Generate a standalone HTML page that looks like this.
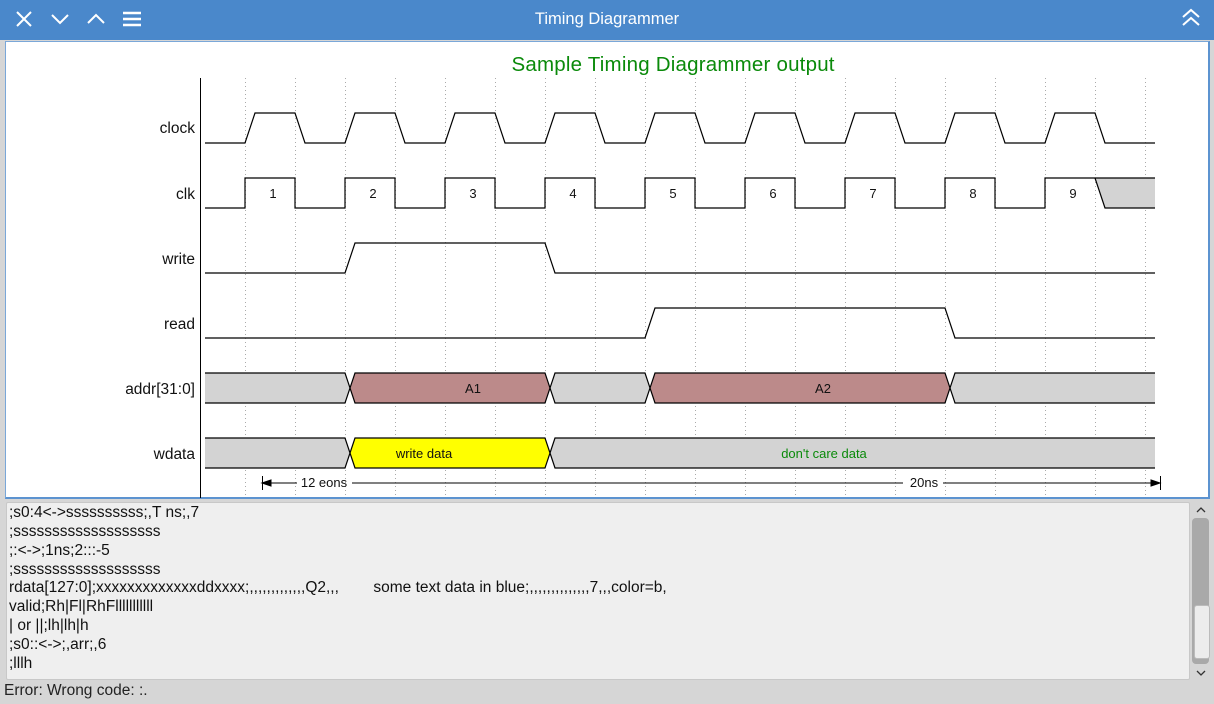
<!DOCTYPE html>
<html><head><meta charset="utf-8"><style>
body{margin:0;width:1214px;height:704px;overflow:hidden;background:#d6d6d6;font-family:"Liberation Sans","DejaVu Sans",sans-serif;position:relative}
#tb{position:absolute;left:0;top:0;width:1214px;height:40px;background:#4a88cb}
#tt{position:absolute;left:0;width:1214px;top:10px;text-align:center;color:#fff;font-size:16.5px}
#cv{position:absolute;left:5px;top:41px;width:1202px;height:455px;background:#fff;border:1px solid #7aa7d8;border-right:2px solid #5c93d0;border-bottom:2px solid #5c93d0}
#ta{position:absolute;left:6px;top:502px;width:1182px;height:176px;background:#efefef;border:1px solid #c8c8c8;border-radius:2px}
#ta div{position:absolute;left:2px;font-size:15.5px;color:#111;white-space:pre}
#sb{position:absolute;left:1192px;top:518px;width:17px;height:146px;background:#a9a9a9;border-radius:4px}
#th{position:absolute;left:1194px;top:605px;width:14px;height:52px;background:#ececec;border-radius:3px;border:1px solid #bbb}
#st{position:absolute;left:4px;top:682px;font-size:15.5px;color:#222}
</style></head><body>
<div id="tb">
<svg width="160" height="40" style="position:absolute;left:0;top:0" stroke="#fff" stroke-width="2" fill="none">
<path d="M17 12L31 26M31 12L17 26"/>
<path d="M52 15L60 23L68 15"/>
<path d="M88 23L96 15L104 23"/>
<path d="M123 13H141M123 19H141M123 25H141" stroke-width="2.5"/>
</svg>
<div id="tt">Timing Diagrammer</div>
<svg width="30" height="40" style="position:absolute;left:1178px;top:0" stroke="#fff" stroke-width="2" fill="none">
<path d="M5 17L13 10L21 17M5 25L13 18L21 25"/>
</svg>
</div>
<div id="cv"></div>
<svg width="1214" height="500" style="position:absolute;left:0;top:0" font-family="Liberation Sans, DejaVu Sans, sans-serif">
<g stroke="#aaa" stroke-dasharray="1,3" stroke-width="1">
<path d="M245.5 78V498M295.5 78V498M345.5 78V498M395.5 78V498M445.5 78V498M495.5 78V498M545.5 78V498M595.5 78V498M645.5 78V498M695.5 78V498M745.5 78V498M795.5 78V498M845.5 78V498M895.5 78V498M945.5 78V498M995.5 78V498M1045.5 78V498M1095.5 78V498M1145.5 78V498"/>
</g>
<text x="673" y="71" text-anchor="middle" fill="#0a8a0a" font-size="20.5" textLength="323">Sample Timing Diagrammer output</text>
<path d="M200.5 78V498" stroke="#000"/>
<g font-size="15.5" fill="#111" text-anchor="end">
<text x="195" y="133">clock</text><text x="195" y="199">clk</text><text x="195" y="264">write</text><text x="195" y="329">read</text><text x="195" y="394">addr[31:0]</text><text x="195" y="459">wdata</text>
</g>
<polygon points="1095,178 1155,178 1155,208 1105,208" fill="#d3d3d3"/>
<g fill="none" stroke="#000" stroke-width="1.2">
<path d="M205,143H245L255,113H295L305,143H345L355,113H395L405,143H445L455,113H495L505,143H545L555,113H595L605,143H645L655,113H695L705,143H745L755,113H795L805,143H845L855,113H895L905,143H945L955,113H995L1005,143H1045L1055,113H1095L1105,143H1155"/>
<path d="M205,208H245V178H295V208H345V178H395V208H445V178H495V208H545V178H595V208H645V178H695V208H745V178H795V208H845V178H895V208H945V178H995V208H1045V178H1095L1105,208H1155M1095,178H1155"/>
<path d="M205,273H345L355,243H545L555,273H1155"/>
<path d="M205,338H645L655,308H945L955,338H1155"/>
</g>
<g stroke="#000" stroke-width="1.2">
<polygon points="205,373 345,373 350,388 345,403 205,403" fill="#d3d3d3" stroke="none"/>
<polygon points="350,388 355,373 545,373 550,388 545,403 355,403" fill="#bc8a8a" stroke="none"/>
<polygon points="550,388 555,373 645,373 650,388 645,403 555,403" fill="#d3d3d3" stroke="none"/>
<polygon points="650,388 655,373 945,373 950,388 945,403 655,403" fill="#bc8a8a" stroke="none"/>
<polygon points="950,388 955,373 1155,373 1155,403 955,403" fill="#d3d3d3" stroke="none"/>
<path fill="none" d="M205,373H345L355,403H545L555,373H645L655,403H945L955,373H1155M205,403H345L355,373H545L555,403H645L655,373H945L955,403H1155"/>
<polygon points="205,438 345,438 350,453 345,468 205,468" fill="#d3d3d3" stroke="none"/>
<polygon points="350,453 355,438 545,438 550,453 545,468 355,468" fill="#ffff00" stroke="none"/>
<polygon points="550,453 555,438 1155,438 1155,468 555,468" fill="#d3d3d3" stroke="none"/>
<path fill="none" d="M205,438H345L355,468H545L555,438H1155M205,468H345L355,438H545L555,468H1155"/>
</g>
<g font-size="13" fill="#111" text-anchor="middle">
<text x="273" y="198">1</text><text x="373" y="198">2</text><text x="473" y="198">3</text><text x="573" y="198">4</text><text x="673" y="198">5</text><text x="773" y="198">6</text><text x="873" y="198">7</text><text x="973" y="198">8</text><text x="1073" y="198">9</text>
<text x="473" y="393">A1</text><text x="823" y="393">A2</text>
<text x="424" y="458">write data</text>
<text x="824" y="458" fill="#0a8a0a">don't care data</text>
<text x="324" y="487">12 eons</text><text x="924" y="487">20ns</text>
</g>
<g stroke="#000" stroke-width="1">
<path d="M262.5 476V490M1160.5 476V490M262 483H297M352 483H903M943 483H1160"/>
<path d="M262 483L271 480V486Z M1160 483L1151 480V486Z" fill="#000"/>
</g>
</svg>
<div id="ta">
<div style="top:1px">;s0:4&lt;-&gt;ssssssssss;,T ns;,7</div>
<div style="top:20px">;sssssssssssssssssss</div>
<div style="top:39px">;:&lt;-&gt;;1ns;2:::-5</div>
<div style="top:58px">;sssssssssssssssssss</div>
<div style="top:76px">rdata[127:0];xxxxxxxxxxxxxddxxxx;,,,,,,,,,,,,,Q2,,,        some text data in blue;,,,,,,,,,,,,,,7,,,color=b,</div>
<div style="top:95px">valid;Rh|Fl|RhFlllllllllll</div>
<div style="top:114px">| or ||;lh|lh|h</div>
<div style="top:133px">;s0::&lt;-&gt;;,arr;,6</div>
<div style="top:152px">;lllh</div>
</div>
<svg width="20" height="180" style="position:absolute;left:1192px;top:500px" stroke="#333" stroke-width="1.3" fill="none">
<path d="M5 12L9 8L13 12M5 171L9 175L13 171"/>
</svg>
<div id="sb"></div><div id="th"></div>
<div id="st">Error: Wrong code: :.</div>
</body></html>
